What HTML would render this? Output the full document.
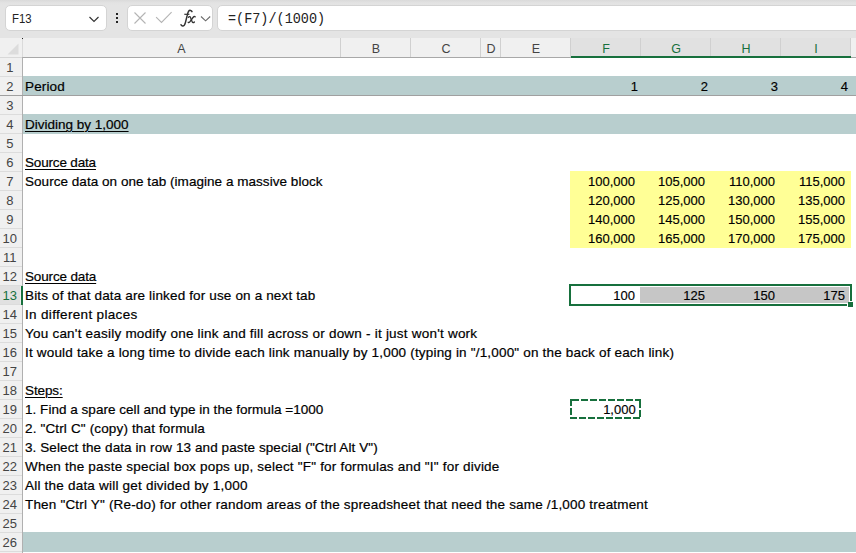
<!DOCTYPE html>
<html><head><meta charset="utf-8">
<style>
html,body{margin:0;padding:0;}
body{width:856px;height:553px;overflow:hidden;position:relative;background:#fff;font-family:"Liberation Sans",sans-serif;}
.a{position:absolute;}
.box{position:absolute;background:#fff;border:1px solid #d4d4d4;border-radius:5px;box-sizing:border-box;}
.ch{position:absolute;top:38px;height:19px;padding-top:1.5px;font-size:12.5px;color:#444;text-align:center;line-height:19px;box-sizing:border-box;}
.ch.sel{background:#e1e1e1;color:#17703d;}
.rn{position:absolute;left:0;width:19.5px;height:19px;font-size:13px;color:#444;text-align:center;line-height:19px;}
.rn.sel{background:#e1e1e1;color:#17703d;}
.band{position:absolute;left:23px;width:833px;height:20px;background:#b8cece;}
.t{position:absolute;left:25px;font-size:13.5px;line-height:19px;white-space:pre;color:#000;-webkit-text-stroke:0.2px #000;}
.u{text-decoration:underline;text-underline-offset:2px;text-decoration-thickness:1px;}
.n{position:absolute;font-size:13px;line-height:19px;padding-top:0.4px;white-space:pre;color:#000;-webkit-text-stroke:0.15px #000;text-align:right;}
</style></head><body>
<div class="a" style="left:0;top:0;width:856px;height:38px;background:linear-gradient(#dadada 0px,#e3e3e3 3px,#e4e4e4 5px);"></div>
<div class="box" style="left:5px;top:5px;width:102px;height:26px;"></div>
<div class="a" style="left:12px;top:6.5px;height:24px;line-height:24px;font-size:13.7px;color:#222;transform:scaleX(0.83);transform-origin:0 0;">F13</div>
<svg class="a" style="left:87.5px;top:14px" width="12" height="10" viewBox="0 0 12 10"><path d="M1.5 3 L6 7.5 L10.5 3" fill="none" stroke="#333" stroke-width="1.15"/></svg>
<div class="a" style="left:116px;top:13px;width:2px;height:2px;background:#222"></div>
<div class="a" style="left:116px;top:17px;width:2px;height:2px;background:#222"></div>
<div class="a" style="left:116px;top:21px;width:2px;height:2px;background:#222"></div>
<div class="box" style="left:127px;top:5px;width:86px;height:26px;"></div>
<svg class="a" style="left:133px;top:11px" width="14" height="14" viewBox="0 0 14 14"><path d="M1.5 1.5 L12.5 12.5 M12.5 1.5 L1.5 12.5" fill="none" stroke="#b4b4b4" stroke-width="1.1"/></svg>
<svg class="a" style="left:155px;top:11px" width="18" height="14" viewBox="0 0 18 14"><path d="M1.1 6.1 L6.5 11.5 L16.6 1.2" fill="none" stroke="#b4b4b4" stroke-width="1.1"/></svg>
<svg class="a" style="left:176px;top:6px" width="38" height="24" viewBox="0 0 38 24"><path d="M16 5.6 C15.4 4.2 13.6 3.9 12.6 5.2 C12 6 11.6 7.6 11.2 9.4 L9.4 16.6 C8.8 19 7.9 20 6.6 19.9 C5.7 19.8 5.1 19.3 5 18.7" fill="none" stroke="#333" stroke-width="1.5" stroke-linecap="round"/><path d="M8.3 8.3 L13.4 8.3" stroke="#333" stroke-width="1.2"/><path d="M12.4 11.2 C13.6 10.1 14.3 10.6 14.8 12.2 L16 15.4 C16.5 16.9 17.4 17 18.4 16" fill="none" stroke="#333" stroke-width="1.3" stroke-linecap="round"/><path d="M19.2 10.8 C18.5 10.3 17.8 10.5 17 11.5 L14 15.6 C13.3 16.6 12.6 16.8 12.2 16.3" fill="none" stroke="#333" stroke-width="1.3" stroke-linecap="round"/><path d="M25 10.5 L29.6 14.8 L34.2 10.5" fill="none" stroke="#6a6a6a" stroke-width="1.1"/></svg>
<div class="box" style="left:217px;top:5px;width:650px;height:26px;"></div>
<div class="a" style="left:228px;top:6.5px;height:24px;line-height:24px;font-family:'Liberation Mono',monospace;font-size:14.5px;color:#222;transform:scaleX(0.93);transform-origin:0 0;">=(F7)/(1000)</div>

<div class="a" style="left:0;top:38px;width:856px;height:19px;background:#f0f0f0;"></div>
<svg class="a" style="left:7px;top:42.5px" width="13" height="13" viewBox="0 0 13 13"><path d="M11.5 0.5 L11.5 11.5 L0.5 11.5 Z" fill="#dcdcdc"/></svg>
<div class="ch" style="left:22px;width:319px;">A</div>
<div class="a" style="left:340px;top:38px;width:1px;height:19px;background:#d0d0d0"></div>
<div class="ch" style="left:341px;width:70px;">B</div>
<div class="a" style="left:410px;top:38px;width:1px;height:19px;background:#d0d0d0"></div>
<div class="ch" style="left:411px;width:70px;">C</div>
<div class="a" style="left:480px;top:38px;width:1px;height:19px;background:#d0d0d0"></div>
<div class="ch" style="left:481px;width:20px;">D</div>
<div class="a" style="left:500px;top:38px;width:1px;height:19px;background:#d0d0d0"></div>
<div class="ch" style="left:501px;width:70px;">E</div>
<div class="a" style="left:570px;top:38px;width:1px;height:19px;background:#d0d0d0"></div>
<div class="ch sel" style="left:571px;width:70px;">F</div>
<div class="a" style="left:640px;top:38px;width:1px;height:19px;background:#d0d0d0"></div>
<div class="ch sel" style="left:641px;width:70px;">G</div>
<div class="a" style="left:710px;top:38px;width:1px;height:19px;background:#d0d0d0"></div>
<div class="ch sel" style="left:711px;width:70px;">H</div>
<div class="a" style="left:780px;top:38px;width:1px;height:19px;background:#d0d0d0"></div>
<div class="ch sel" style="left:781px;width:70px;">I</div>
<div class="a" style="left:850px;top:38px;width:1px;height:19px;background:#d0d0d0"></div>
<div class="ch" style="left:851px;width:49px;"></div>
<div class="a" style="left:899px;top:38px;width:1px;height:19px;background:#d0d0d0"></div>
<div class="a" style="left:571px;top:56px;width:280px;height:2px;background:#17703d"></div>
<div class="a" style="left:22px;top:57px;width:549px;height:1px;background:#a8a8a8"></div>
<div class="a" style="left:0;top:57px;width:22px;height:1px;background:#d8d8d8"></div>
<div class="a" style="left:851px;top:57px;width:5px;height:1px;background:#a8a8a8"></div>
<div class="a" style="left:0;top:58px;width:22px;height:495px;background:#f0f0f0;"></div>
<div class="rn" style="top:58px;">1</div>
<div class="a" style="left:0;top:76px;width:22px;height:1px;background:#dcdcdc"></div>
<div class="rn" style="top:77px;">2</div>
<div class="a" style="left:0;top:95px;width:22px;height:1px;background:#dcdcdc"></div>
<div class="rn" style="top:96px;">3</div>
<div class="a" style="left:0;top:114px;width:22px;height:1px;background:#dcdcdc"></div>
<div class="rn" style="top:115px;">4</div>
<div class="a" style="left:0;top:133px;width:22px;height:1px;background:#dcdcdc"></div>
<div class="rn" style="top:134px;">5</div>
<div class="a" style="left:0;top:152px;width:22px;height:1px;background:#dcdcdc"></div>
<div class="rn" style="top:153px;">6</div>
<div class="a" style="left:0;top:171px;width:22px;height:1px;background:#dcdcdc"></div>
<div class="rn" style="top:172px;">7</div>
<div class="a" style="left:0;top:190px;width:22px;height:1px;background:#dcdcdc"></div>
<div class="rn" style="top:191px;">8</div>
<div class="a" style="left:0;top:209px;width:22px;height:1px;background:#dcdcdc"></div>
<div class="rn" style="top:210px;">9</div>
<div class="a" style="left:0;top:228px;width:22px;height:1px;background:#dcdcdc"></div>
<div class="rn" style="top:229px;">10</div>
<div class="a" style="left:0;top:247px;width:22px;height:1px;background:#dcdcdc"></div>
<div class="rn" style="top:248px;">11</div>
<div class="a" style="left:0;top:266px;width:22px;height:1px;background:#dcdcdc"></div>
<div class="rn" style="top:267px;">12</div>
<div class="a" style="left:0;top:285px;width:22px;height:1px;background:#dcdcdc"></div>
<div class="rn sel" style="top:286px;">13</div>
<div class="a" style="left:0;top:304px;width:22px;height:1px;background:#dcdcdc"></div>
<div class="rn" style="top:305px;">14</div>
<div class="a" style="left:0;top:323px;width:22px;height:1px;background:#dcdcdc"></div>
<div class="rn" style="top:324px;">15</div>
<div class="a" style="left:0;top:342px;width:22px;height:1px;background:#dcdcdc"></div>
<div class="rn" style="top:343px;">16</div>
<div class="a" style="left:0;top:361px;width:22px;height:1px;background:#dcdcdc"></div>
<div class="rn" style="top:362px;">17</div>
<div class="a" style="left:0;top:380px;width:22px;height:1px;background:#dcdcdc"></div>
<div class="rn" style="top:381px;">18</div>
<div class="a" style="left:0;top:399px;width:22px;height:1px;background:#dcdcdc"></div>
<div class="rn" style="top:400px;">19</div>
<div class="a" style="left:0;top:418px;width:22px;height:1px;background:#dcdcdc"></div>
<div class="rn" style="top:419px;">20</div>
<div class="a" style="left:0;top:437px;width:22px;height:1px;background:#dcdcdc"></div>
<div class="rn" style="top:438px;">21</div>
<div class="a" style="left:0;top:456px;width:22px;height:1px;background:#dcdcdc"></div>
<div class="rn" style="top:457px;">22</div>
<div class="a" style="left:0;top:475px;width:22px;height:1px;background:#dcdcdc"></div>
<div class="rn" style="top:476px;">23</div>
<div class="a" style="left:0;top:494px;width:22px;height:1px;background:#dcdcdc"></div>
<div class="rn" style="top:495px;">24</div>
<div class="a" style="left:0;top:513px;width:22px;height:1px;background:#dcdcdc"></div>
<div class="rn" style="top:514px;">25</div>
<div class="a" style="left:0;top:532px;width:22px;height:1px;background:#dcdcdc"></div>
<div class="rn" style="top:533px;">26</div>
<div class="a" style="left:0;top:551px;width:22px;height:1px;background:#dcdcdc"></div>
<div class="rn" style="top:552px;">27</div>
<div class="a" style="left:0;top:570px;width:22px;height:1px;background:#dcdcdc"></div>
<div class="a" style="left:22px;top:38px;width:1px;height:19px;background:#dadada"></div>
<div class="a" style="left:22px;top:57px;width:1px;height:496px;background:#b0b0b0"></div>
<div class="a" style="left:22px;top:38px;width:1px;height:1px;background:#222"></div>
<div class="a" style="left:21px;top:286px;width:2px;height:19px;background:#17703d"></div>
<div class="band" style="top:76px;"></div>
<div class="band" style="top:114px;"></div>
<div class="band" style="top:532px;"></div>
<div class="a" style="left:0;top:95px;width:856px;height:1px;background:#a0a0a0"></div>
<div class="a" style="left:570px;top:171px;width:281px;height:77px;background:#ffff96;"></div>
<div class="a" style="left:640px;top:287px;width:209px;height:16px;background:#c6c6c6;"></div>
<div class="t" style="top:77px;letter-spacing:0.15px;">Period</div>
<div class="t u" style="top:115px;letter-spacing:0.0px;">Dividing by 1,000</div>
<div class="t u" style="top:153px;letter-spacing:-0.17px;">Source data</div>
<div class="t" style="top:172px;letter-spacing:0.04px;">Source data on one tab (imagine a massive block</div>
<div class="t u" style="top:267px;letter-spacing:-0.15px;">Source data</div>
<div class="t" style="top:286px;letter-spacing:0.15px;">Bits of that data are linked for use on a next tab</div>
<div class="t" style="top:305px;letter-spacing:0.33px;">In different places</div>
<div class="t" style="top:324px;letter-spacing:0.22px;">You can't easily modify one link and fill across or down - it just won't work</div>
<div class="t" style="top:343px;letter-spacing:0.18px;">It would take a long time to divide each link manually by 1,000 (typing in "/1,000" on the back of each link)</div>
<div class="t u" style="top:381px;letter-spacing:-0.1px;">Steps:</div>
<div class="t" style="top:400px;letter-spacing:0.03px;">1. Find a spare cell and type in the formula =1000</div>
<div class="t" style="top:419px;letter-spacing:0.15px;">2. "Ctrl C" (copy) that formula</div>
<div class="t" style="top:438px;letter-spacing:0.09px;">3. Select the data in row 13 and paste special ("Ctrl Alt V")</div>
<div class="t" style="top:457px;letter-spacing:0.2px;">When the paste special box pops up, select "F" for formulas and "I" for divide</div>
<div class="t" style="top:476px;letter-spacing:0.21px;">All the data will get divided by 1,000</div>
<div class="t" style="top:495px;letter-spacing:0.18px;">Then "Ctrl Y" (Re-do) for other random areas of the spreadsheet that need the same /1,000 treatment</div>
<div class="n" style="top:172px;left:571px;width:64px;">100,000</div>
<div class="n" style="top:172px;left:641px;width:64px;">105,000</div>
<div class="n" style="top:172px;left:711px;width:64px;">110,000</div>
<div class="n" style="top:172px;left:781px;width:64px;">115,000</div>
<div class="n" style="top:191px;left:571px;width:64px;">120,000</div>
<div class="n" style="top:191px;left:641px;width:64px;">125,000</div>
<div class="n" style="top:191px;left:711px;width:64px;">130,000</div>
<div class="n" style="top:191px;left:781px;width:64px;">135,000</div>
<div class="n" style="top:210px;left:571px;width:64px;">140,000</div>
<div class="n" style="top:210px;left:641px;width:64px;">145,000</div>
<div class="n" style="top:210px;left:711px;width:64px;">150,000</div>
<div class="n" style="top:210px;left:781px;width:64px;">155,000</div>
<div class="n" style="top:229px;left:571px;width:64px;">160,000</div>
<div class="n" style="top:229px;left:641px;width:64px;">165,000</div>
<div class="n" style="top:229px;left:711px;width:64px;">170,000</div>
<div class="n" style="top:229px;left:781px;width:64px;">175,000</div>
<div class="n" style="top:286px;left:571px;width:64px;">100</div>
<div class="n" style="top:286px;left:641px;width:64px;">125</div>
<div class="n" style="top:286px;left:711px;width:64px;">150</div>
<div class="n" style="top:286px;left:781px;width:64px;">175</div>
<div class="n" style="top:77px;left:571px;width:67px;">1</div>
<div class="n" style="top:77px;left:641px;width:67px;">2</div>
<div class="n" style="top:77px;left:711px;width:67px;">3</div>
<div class="n" style="top:77px;left:781px;width:67px;">4</div>
<div class="n" style="top:400px;left:571px;width:64.7px;">1,000</div>
<div class="a" style="left:569px;top:284px;width:283px;height:22px;border:2px solid #17703d;box-sizing:border-box;"></div>
<div class="a" style="left:847px;top:303px;width:7px;height:5px;background:#fff;"></div>
<div class="a" style="left:849px;top:301px;width:5px;height:3px;background:#fff;"></div>
<div class="a" style="left:848px;top:302px;width:5px;height:5px;background:#17703d;"></div>
<svg class="a" style="left:0;top:0" width="856" height="553" shape-rendering="crispEdges"><rect x="570" y="399" width="9" height="2" fill="#17703d"/><rect x="581" y="399" width="7" height="2" fill="#17703d"/><rect x="590" y="399" width="7" height="2" fill="#17703d"/><rect x="599" y="399" width="7" height="2" fill="#17703d"/><rect x="608" y="399" width="7" height="2" fill="#17703d"/><rect x="617" y="399" width="7" height="2" fill="#17703d"/><rect x="626" y="399" width="7" height="2" fill="#17703d"/><rect x="635" y="399" width="6" height="2" fill="#17703d"/><rect x="570" y="417" width="7" height="2" fill="#17703d"/><rect x="579" y="417" width="7" height="2" fill="#17703d"/><rect x="588" y="417" width="7" height="2" fill="#17703d"/><rect x="597" y="417" width="7" height="2" fill="#17703d"/><rect x="606" y="417" width="7" height="2" fill="#17703d"/><rect x="615" y="417" width="7" height="2" fill="#17703d"/><rect x="624" y="417" width="7" height="2" fill="#17703d"/><rect x="633" y="417" width="7" height="2" fill="#17703d"/><rect x="570" y="399" width="2" height="7" fill="#17703d"/><rect x="570" y="408" width="2" height="7" fill="#17703d"/><rect x="639" y="401" width="2" height="7" fill="#17703d"/><rect x="639" y="410" width="2" height="7" fill="#17703d"/></svg>
</body></html>
